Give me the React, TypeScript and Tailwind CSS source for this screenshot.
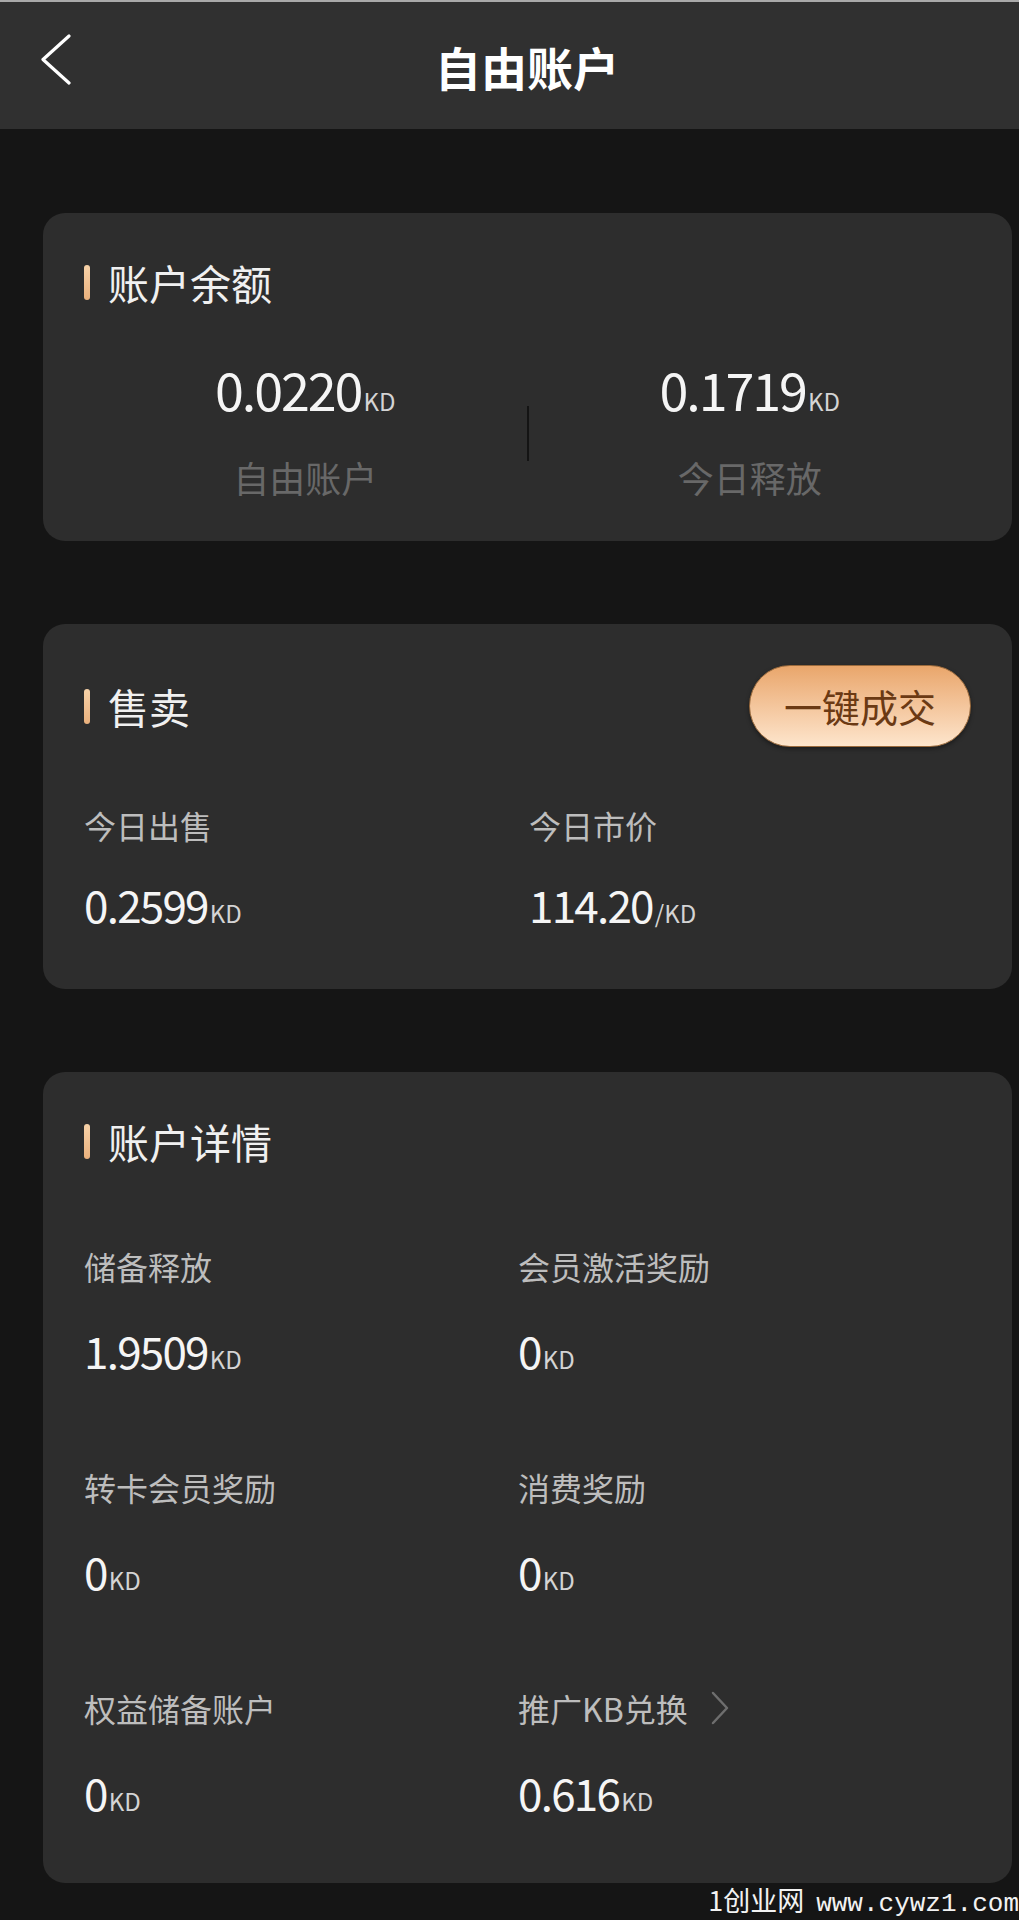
import { ReactNode } from "react";

const font = {
  fontFamily: '"Noto Sans CJK SC", "Noto Sans", sans-serif',
};

function SectionTitle({ text }: { text: string }) {
  return (
    <div className="flex items-center gap-[18px]">
      <span className="w-[6px] h-[35px] rounded-full bg-gradient-to-b from-[#f7d2a8] to-[#e9b07c]" />
      <span className="text-[41px] leading-none text-[#f0f0f0]">{text}</span>
    </div>
  );
}

function Amount({
  value,
  unit,
  size,
}: {
  value: string;
  unit: string;
  size: string;
}) {
  return (
    <div className="flex items-baseline leading-none">
      <span className={`${size} tracking-[-0.04em] text-[#f5f5f5]`}>{value}</span>
      <span className="ml-[2px] text-[24px] text-[#d4d4d4]">{unit}</span>
    </div>
  );
}

function DetailItem({
  label,
  value,
  arrow,
}: {
  label: string;
  value: string;
  arrow?: boolean;
}) {
  return (
    <div className="flex flex-col">
      <div className="flex items-center h-[32px]">
        <span className="text-[32px] leading-none text-[#bdbdbd]">{label}</span>
        {arrow && (
          <svg
            width="20"
            height="34"
            viewBox="0 0 20 34"
            className="ml-[22px]"
            fill="none"
            stroke="#6e6e6e"
            strokeWidth="2.5"
            strokeLinecap="round"
            strokeLinejoin="round"
          >
            <polyline points="3,2 17,17 3,32" />
          </svg>
        )}
      </div>
      <div className="mt-[46px]">
        <Amount value={value} unit="KD" size="text-[44px]" />
      </div>
    </div>
  );
}

function Card({ children, className }: { children: ReactNode; className: string }) {
  return (
    <div className={`ml-[43px] w-[969px] rounded-[22px] bg-[#2d2d2d] px-[41px] ${className}`}>
      {children}
    </div>
  );
}

export default function App() {
  return (
    <div className="w-full h-[1920px] overflow-hidden bg-[#151515]" style={font}>
      <header className="flex items-center h-[129px] border-t-2 border-[#a9a9a9] bg-[#303030] pl-[40px] pr-[36px]">
        <svg
          width="31"
          height="51"
          viewBox="0 0 31 51"
          fill="none"
          stroke="#ffffff"
          strokeWidth="3.2"
          strokeLinecap="round"
          strokeLinejoin="round"
          className="mb-[13px]"
        >
          <polyline points="29,2 3,25.5 29,49" />
        </svg>
        <h1 className="flex-1 text-center text-[46px] leading-none font-bold text-white">
          自由账户
        </h1>
      </header>

      <div className="flex flex-col gap-[83px] pt-[84px]">
        <Card className="pt-[49px] pb-[46px]">
          <SectionTitle text="账户余额" />
          <div className="flex items-center mt-[60px]">
            <div className="flex-1 flex flex-col items-center">
              <Amount value="0.0220" unit="KD" size="text-[52px]" />
              <span className="mt-[44px] text-[36px] leading-none text-[#686868]">自由账户</span>
            </div>
            <div className="w-[2px] h-[55px] mt-[8px] bg-[#141414]" />
            <div className="flex-1 flex flex-col items-center">
              <Amount value="0.1719" unit="KD" size="text-[52px]" />
              <span className="mt-[44px] text-[36px] leading-none text-[#686868]">今日释放</span>
            </div>
          </div>
        </Card>

        <Card className="pt-[41px] pb-[63px]">
          <div className="flex items-center justify-between">
            <SectionTitle text="售卖" />
            <button className="w-[222px] h-[82px] rounded-full border border-[#9a6a3c] bg-gradient-to-b from-[#e9a66b] to-[#fde5cc] text-[38px] leading-none text-[#6b3a14] shadow-[0_2px_4px_rgba(0,0,0,0.4)]">
              一键成交
            </button>
          </div>
          <div className="grid grid-cols-[445px_1fr] mt-[62px]">
            <div className="flex flex-col">
              <span className="text-[32px] leading-none text-[#bdbdbd]">今日出售</span>
              <div className="mt-[41px]">
                <Amount value="0.2599" unit="KD" size="text-[44px]" />
              </div>
            </div>
            <div className="flex flex-col">
              <span className="text-[32px] leading-none text-[#bdbdbd]">今日市价</span>
              <div className="mt-[41px]">
                <Amount value="114.20" unit="/KD" size="text-[44px]" />
              </div>
            </div>
          </div>
        </Card>

        <Card className="pt-[49px] pb-[69px]">
          <SectionTitle text="账户详情" />
          <div className="grid grid-cols-[434px_1fr] gap-y-[99px] mt-[88px]">
            <DetailItem label="储备释放" value="1.9509" />
            <DetailItem label="会员激活奖励" value="0" />
            <DetailItem label="转卡会员奖励" value="0" />
            <DetailItem label="消费奖励" value="0" />
            <DetailItem label="权益储备账户" value="0" />
            <DetailItem label="推广KB兑换" value="0.616" arrow />
          </div>
        </Card>
      </div>

      <div className="flex justify-end items-baseline gap-[12px] mt-[3px] text-[27px] leading-none text-[#f2f2f2]">
        <span>1创业网</span>
        <span style={{ fontFamily: '"Liberation Mono", monospace' }} className="text-[26px]">
          www.cywz1.com
        </span>
      </div>
    </div>
  );
}
